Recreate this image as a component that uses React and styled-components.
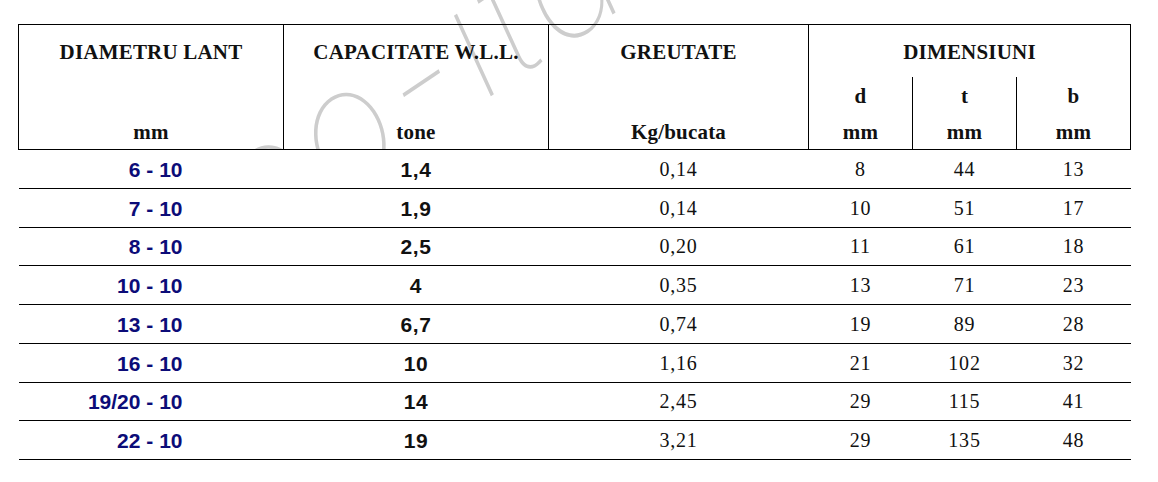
import React from 'react';
import styled, { createGlobalStyle } from 'styled-components';

const GlobalStyle = createGlobalStyle`
  html, body {
    margin: 0;
    padding: 0;
    background: #fff;
  }
  body {
    font-family: 'Liberation Serif', 'Times New Roman', serif;
  }
`;

const Page = styled.div`
  position: relative;
  width: 1158px;
  height: 482px;
  overflow: hidden;
  box-sizing: border-box;
  padding: 24px 0 0 18px;
`;

// faint site watermark, sits behind the table (body cells are opaque)
const Watermark = styled.div`
  position: absolute;
  left: 181px;
  top: 139px;
  transform-origin: 0 0;
  transform: rotate(-34deg);
  font-family: Inter, 'DejaVu Sans', sans-serif;
  font-style: italic;
  font-weight: 100;
  font-size: 160px;
  letter-spacing: 8px;
  line-height: 1;
  color: #cdcdcd;
  white-space: nowrap;
  pointer-events: none;
  user-select: none;
  z-index: 0;
`;

const Table = styled.table`
  position: relative;
  z-index: 1;
  border-collapse: collapse;
  table-layout: fixed;
  width: 1112px;
`;

const Col = styled.col`
  width: ${(p) => p.$w}px;
`;

const Th = styled.th`
  font-family: 'Liberation Serif', 'Times New Roman', serif;
  font-weight: 700;
  font-size: 21px;
  line-height: 24px;
  letter-spacing: 0.2px;
  color: #111;
  text-align: center;
  vertical-align: top;
  padding: 0;
  border-left: 1px solid #000;
  border-right: 1px solid #000;
`;

const TitleCell = styled(Th)`
  border-top: 1px solid #000;
  padding: 15px 0 13px;
`;

const MidCell = styled(Th)`
  padding: 7px 0 5px;
`;

const UnitCell = styled(Th)`
  border-bottom: 1px solid #000;
  padding: 7px 0 5px;
`;

const Row = styled.tr`
  height: 38.75px;
`;

const Td = styled.td`
  padding: 1px ${(p) => (p.$kind === 'size' ? '101px' : '0')} 0 0;
  border-bottom: 1px solid #000;
  background: #fff;
  vertical-align: middle;
  line-height: 23px;
  font-size: ${(p) => (p.$kind === 'num' ? '20px' : '21px')};
  letter-spacing: ${(p) => (p.$kind === 'load' ? '0.6px' : p.$kind === 'num' ? '0.8px' : '0')};
  text-align: ${(p) => (p.$kind === 'size' ? 'right' : 'center')};
  font-family: ${(p) =>
    p.$kind === 'num'
      ? "'Liberation Serif', 'Times New Roman', serif"
      : "'Liberation Sans', Arial, sans-serif"};
  font-weight: ${(p) => (p.$kind === 'num' ? 400 : 700)};
  color: ${(p) => (p.$kind === 'size' ? '#0c0c78' : '#111')};
`;

const rows = [
  ['6 - 10', '1,4', '0,14', '8', '44', '13'],
  ['7 - 10', '1,9', '0,14', '10', '51', '17'],
  ['8 - 10', '2,5', '0,20', '11', '61', '18'],
  ['10 - 10', '4', '0,35', '13', '71', '23'],
  ['13 - 10', '6,7', '0,74', '19', '89', '28'],
  ['16 - 10', '10', '1,16', '21', '102', '32'],
  ['19/20 - 10', '14', '2,45', '29', '115', '41'],
  ['22 - 10', '19', '3,21', '29', '135', '48'],
];

const widths = [265, 265, 260, 104, 104, 114];

export default function App() {
  return (
    <>
      <GlobalStyle />
      <Page>
        <Watermark aria-hidden="true">co-ital</Watermark>
        <Table>
          <colgroup>
            {widths.map((w, i) => (
              <Col key={i} $w={w} />
            ))}
          </colgroup>
          <thead>
            <tr>
              <TitleCell>DIAMETRU LANT</TitleCell>
              <TitleCell>CAPACITATE W.L.L.</TitleCell>
              <TitleCell>GREUTATE</TitleCell>
              <TitleCell colSpan={3}>DIMENSIUNI</TitleCell>
            </tr>
            <tr>
              <MidCell />
              <MidCell />
              <MidCell />
              <MidCell>d</MidCell>
              <MidCell>t</MidCell>
              <MidCell>b</MidCell>
            </tr>
            <tr>
              <UnitCell>mm</UnitCell>
              <UnitCell>tone</UnitCell>
              <UnitCell>Kg/bucata</UnitCell>
              <UnitCell>mm</UnitCell>
              <UnitCell>mm</UnitCell>
              <UnitCell>mm</UnitCell>
            </tr>
          </thead>
          <tbody>
            {rows.map((r) => (
              <Row key={r[0]}>
                <Td $kind="size">{r[0]}</Td>
                <Td $kind="load">{r[1]}</Td>
                <Td $kind="num">{r[2]}</Td>
                <Td $kind="num">{r[3]}</Td>
                <Td $kind="num">{r[4]}</Td>
                <Td $kind="num">{r[5]}</Td>
              </Row>
            ))}
          </tbody>
        </Table>
      </Page>
    </>
  );
}
